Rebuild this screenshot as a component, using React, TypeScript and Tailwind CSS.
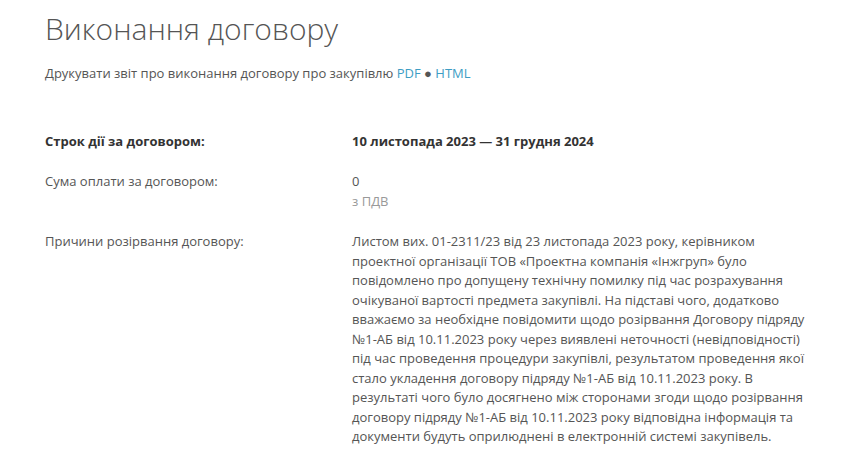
export default function App() {
  return (
    <div className="min-h-[469px] bg-white px-[45px] pt-[9px] text-[13px] leading-[21px] text-[#555]" style={{ fontFamily: '"Open Sans", sans-serif' }}>
      <h1 className="text-[30px] font-light leading-[40px] text-[#555]">Виконання договору</h1>
      <p className="mt-[14px]">
        Друкувати звіт про виконання договору про закупівлю{' '}
        <a href="#" className="text-[#3d9dc4]">PDF</a>{' '}
        <span className="text-[#555]">●</span>{' '}
        <a href="#" className="text-[#3d9dc4]">HTML</a>
      </p>

      <div className="mt-[48px] flex flex-col leading-[19.5px]">
        <div className="flex">
          <div className="w-[307px] shrink-0 font-bold text-[#333]">Строк дії за договором:</div>
          <div className="font-bold text-[#333]">10 листопада 2023 — 31 грудня 2024</div>
        </div>
        <div className="mt-[20.5px] flex">
          <div className="w-[307px] shrink-0">Сума оплати за договором:</div>
          <div>
            <div>0</div>
            <div className="text-[#999]">з ПДВ</div>
          </div>
        </div>
        <div className="mt-[21px] flex">
          <div className="w-[307px] shrink-0">Причини розірвання договору:</div>
          <div className="w-[466px] shrink-0">
            Листом вих. 01-2311/23 від 23 листопада 2023 року, керівником проектної організації ТОВ «Проектна компанія «Інжгруп» було повідомлено про допущену технічну помилку під час розрахування очікуваної вартості предмета закупівлі. На підставі чого, додатково вважаємо за необхідне повідомити щодо розірвання Договору підряду №1-АБ від 10.11.2023 року через виявлені неточності (невідповідності) під час проведення процедури закупівлі, результатом проведення якої стало укладення договору підряду №1-АБ від 10.11.2023 року. В результаті чого було досягнено між сторонами згоди щодо розірвання договору підряду №1-АБ від 10.11.2023 року відповідна інформація та документи будуть оприлюднені в електронній системі закупівель.
          </div>
        </div>
      </div>
    </div>
  );
}
